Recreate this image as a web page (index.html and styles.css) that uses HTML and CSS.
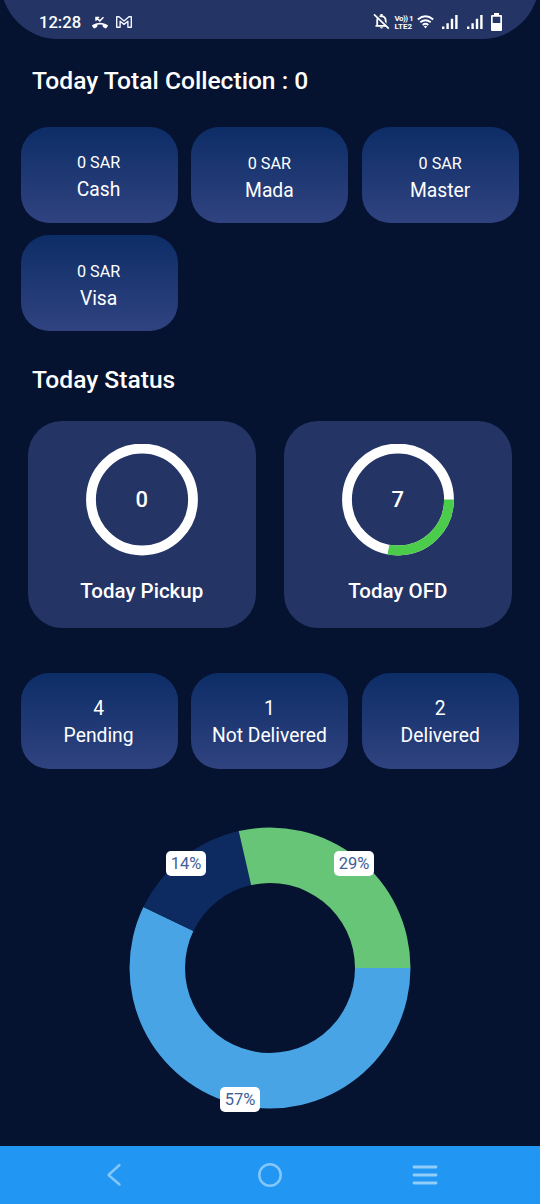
FILE: index.html
```html
<!DOCTYPE html>
<html lang="en">
<head>
<meta charset="utf-8">
<meta name="viewport" content="width=device-width">
<title>Today Status</title>
<link rel="stylesheet" href="styles.css">
</head>
<body>
<div class="screen">
  <header class="statusbar">
    <span class="clock">12:28</span>
    <svg class="ico-call" width="18" height="14" viewBox="0 0 18 14"><path d="M1.2 9.2C5.500 5.800 12.500 5.800 16.800 9.200Q17.200 9.700 16.800 10.200L15.200 12.200Q14.700 12.600 14.200 12.300L12 10.900Q11.600 10.600 11.600 9L11.600 8.800Q9 8.100 6.400 8.800L6.400 9Q6.400 10.600 6 10.900L3.800 12.300Q3.300 12.600 2.800 12.200L1.200 10.200Q.8 9.700 1.200 9.200Z" fill="#fff"/><path d="M5 4.800V1.500H8.200M5.300 1.800L8.800 4.900L12.500 1.300" fill="none" stroke="#fff" stroke-width="1.500"/></svg>
    <svg class="ico-mail" width="16" height="12" viewBox="0 0 16 12"><path d="M.7 11.300V.8H3L8 5L13 .8H15.300V11.300H11.900V5.200L8 8.400L4.100 5.200V11.300Z" fill="none" stroke="#f3f6ff" stroke-width="1.400" stroke-linejoin="round"/></svg>
    <div class="system">
      <svg class="ico-bell" width="17" height="17" viewBox="0 0 17 17"><path d="M4.200 12.500V7.200Q4.400 3.600 8.500 3.200Q12.400 3.600 12.700 7.200V12.500M2.500 12.800H14.500" fill="none" stroke="#fff" stroke-width="1.800"/><path d="M8.500 1V3" stroke="#fff" stroke-width="2.200"/><path d="M6.700 14.200H10.300Q8.500 16.800 6.700 14.200Z" fill="#fff"/><path d="M2.200 .5L16.500 14.400" stroke="#233465" stroke-width="1.600"/><path d="M1 1.300L15.800 15.600" stroke="#fff" stroke-width="1.700"/></svg>
      <span class="volte"><span class="volte-top">Vo)) 1</span><span>LTE2</span></span>
      <svg class="ico-wifi" width="17" height="14" viewBox="0 0 17 14"><g fill="none" stroke="#fff" stroke-width="1.900"><path d="M.8 4.400Q8.500-2 16.200 4.400"/><path d="M3.300 7.300Q8.500 3 13.700 7.300"/><path d="M5.700 10Q8.500 7.700 11.300 10"/></g><path d="M6.800 11.300Q8.500 10.200 10.200 11.300L8.500 13.400Z" fill="#fff"/></svg>
      <svg class="ico-signal" width="16" height="15" viewBox="0 0 16 15"><path d="M0 11.500H2.400V14H0ZM4.400 8.200H6.800V14H4.400ZM8.800 3.800H11.200V14H8.800ZM13.200 0H15.600V14H13.200Z" fill="#fff"/></svg>
      <svg class="ico-signal" width="16" height="15" viewBox="0 0 16 15"><path d="M0 11.500H2.400V14H0ZM4.400 8.200H6.800V14H4.400ZM8.800 3.800H11.200V14H8.800ZM13.200 0H15.600V14H13.200Z" fill="#fff"/></svg>
      <svg class="ico-battery" width="11" height="18" viewBox="0 0 11 18"><path fill-rule="evenodd" d="M3 0H8V2H10Q11 2 11 3V17Q11 18 10 18H1Q0 18 0 17V3Q0 2 1 2H3ZM1.700 3.800V10H9.300V3.800Z" fill="#fff"/></svg>
    </div>
  </header>

  <main class="content">
    <h1 class="heading">Today Total Collection : 0</h1>
    <section class="tiles">
      <div class="tile first"><span class="amount">0 SAR</span><span class="label">Cash</span></div>
      <div class="tile"><span class="amount">0 SAR</span><span class="label">Mada</span></div>
      <div class="tile"><span class="amount">0 SAR</span><span class="label">Master</span></div>
      <div class="tile"><span class="amount">0 SAR</span><span class="label">Visa</span></div>
    </section>

    <h2 class="heading status-heading">Today Status</h2>
    <section class="gauges">
      <div class="gauge-card">
        <div class="gauge">
          <svg width="112" height="112" viewBox="0 0 112 112"><circle cx="56" cy="55.500" r="51" fill="none" stroke="#fff" stroke-width="9.800"/></svg>
          <span class="gauge-value">0</span>
        </div>
        <span class="gauge-label">Today Pickup</span>
      </div>
      <div class="gauge-card">
        <div class="gauge">
          <svg width="112" height="112" viewBox="0 0 112 112"><circle cx="56" cy="55.500" r="51" fill="none" stroke="#fff" stroke-width="9.800"/><circle cx="56" cy="55.500" r="51" fill="none" stroke="#4bcc4a" stroke-width="9.800" pathLength="100" stroke-dasharray="28 72"/></svg>
          <span class="gauge-value">7</span>
        </div>
        <span class="gauge-label">Today OFD</span>
      </div>
    </section>

    <section class="tiles counts">
      <div class="tile"><span class="count">4</span><span class="label">Pending</span></div>
      <div class="tile"><span class="count">1</span><span class="label">Not Delivered</span></div>
      <div class="tile"><span class="count">2</span><span class="label">Delivered</span></div>
    </section>

    <section class="chart">
      <svg width="282" height="282" viewBox="-141 -141 282 282">
        <path d="M140.500 0A140.500 140.500 0 1 1 -126.600 -61L-76.600 -36.900A85 85 0 1 0 85 0Z" fill="#48a4e5"/>
        <path d="M-126.600 -61A140.500 140.500 0 0 1 -31.300 -137L-18.900 -82.900A85 85 0 0 0 -76.600 -36.900Z" fill="#0d2b61"/>
        <path d="M-31.300 -137A140.500 140.500 0 0 1 140.500 0H85A85 85 0 0 0 -18.900 -82.900Z" fill="#67c577"/>
      </svg>
      <span class="badge badge-notdelivered">14%</span>
      <span class="badge badge-delivered">29%</span>
      <span class="badge badge-pending">57%</span>
    </section>
  </main>

  <nav class="navbar">
    <svg class="nav-back" width="16" height="24" viewBox="0 0 16 24"><path d="M13.500 2L2.500 12L13.500 21.500" fill="none" stroke="#83c7fb" stroke-width="2.400" stroke-linecap="round" stroke-linejoin="round"/></svg>
    <svg class="nav-home" width="26" height="26" viewBox="0 0 26 26"><circle cx="13" cy="13" r="10.700" fill="none" stroke="#83c7fb" stroke-width="2.500"/></svg>
    <svg class="nav-menu" width="26" height="22" viewBox="0 0 26 22"><path d="M2 3H24M2 11H24M2 19H24" stroke="#90cdfb" stroke-width="2.800" stroke-linecap="round"/></svg>
  </nav>
</div>
</body>
</html>
```
FILE: styles.css
```css
* { box-sizing: border-box; }
body { margin: 0; background: #051230; color: #fff; font-family: Roboto, "Liberation Sans", sans-serif; }
svg { display: block; flex: none; }
.screen { width: 540px; height: 1204px; display: flex; flex-direction: column; overflow: hidden; background: #051230; }

.statusbar { position: relative; isolation: isolate; height: 39px; flex: none; display: flex; align-items: flex-start; padding-left: 39px; overflow: hidden; }
.statusbar::before { content: ""; position: absolute; z-index: -1; left: 1px; right: 1px; bottom: 0; height: 120px; border-radius: 57px; background: #233465; }
.clock { width: 52px; margin-top: 13px; font-size: 16.600px; line-height: 20px; font-weight: 500; }
.ico-call { margin-top: 16px; }
.ico-mail { margin: 16px 0 0 7px; }
.system { display: flex; align-items: flex-start; margin-left: auto; padding-right: 38.500px; }
.ico-bell { margin-top: 13px; }
.volte { width: 20px; margin: 15px 0 0 5px; display: flex; flex-direction: column; font-size: 8px; line-height: 7.500px; font-weight: 700; white-space: nowrap; }
.volte-top { letter-spacing: -.550px; }
.ico-wifi { margin: 15px 0 0 2px; }
.ico-signal { margin: 15px 0 0 9px; }
.ico-wifi + .ico-signal { margin-left: 8px; }
.ico-battery { margin: 13px 0 0 8px; }

.content { flex: 1; }
.heading { margin: 27px 0 0 32px; font-size: 24.600px; line-height: 30px; font-weight: 500; }
.tiles { display: grid; grid-template-columns: repeat(3, 157px); column-gap: 13.800px; row-gap: 11.500px; padding: 31px 0 0 20.600px; }
.tile { height: 96px; padding-top: 26px; border-radius: 28px; background: linear-gradient(#0d2d67, #304380); display: flex; flex-direction: column; align-items: center; white-space: nowrap; }
.tile.first { padding-top: 25px; }
.amount { font-size: 16.200px; line-height: 22px; }
.label { font-size: 19.300px; line-height: 26px; margin-top: 3px; }
.tile > span { transform: translateX(-.500px); }
.count { font-size: 19.300px; line-height: 24px; }
.status-heading { margin-top: 34.500px; }
.gauges { display: grid; grid-template-columns: 228.500px 228.500px; column-gap: 27.500px; padding: 26px 0 0 27.500px; }
.gauge-card { height: 206.500px; padding-top: 23px; border-radius: 34px; background: #233465; display: flex; flex-direction: column; align-items: center; }
.gauge { display: grid; place-items: center; }
.gauge > * { grid-area: 1 / 1; }
.gauge-value { font-size: 22px; font-weight: 500; line-height: 28px; }
.gauge-label { margin-top: 20.500px; font-size: 20.500px; line-height: 28px; font-weight: 500; }
.counts { padding-top: 45.500px; }
.counts .tile { padding-top: 24px; }
.counts .label { margin-top: 2px; }

.chart { position: relative; width: 282px; margin: 58px auto 0; }
.badge { position: absolute; width: 40px; height: 25px; border-radius: 5px; background: #fff; color: #405f98; font-size: 16.500px; line-height: 25px; text-align: center; }
.badge-notdelivered { left: 37px; top: 23.500px; }
.badge-delivered { left: 205px; top: 23.500px; }
.badge-pending { left: 91px; top: 260px; }

.navbar { height: 58px; flex: none; background: #2296f3; display: flex; align-items: center; padding-left: 106px; }
.nav-home { margin-left: 135px; }
.nav-menu { margin-left: 129px; }
```
